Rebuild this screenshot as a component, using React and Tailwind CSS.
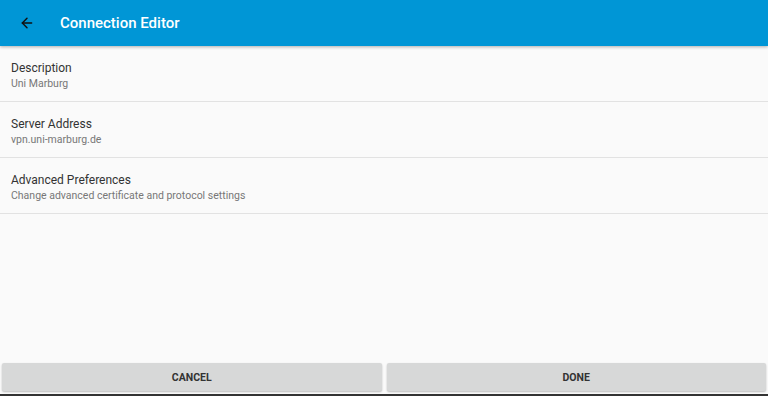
import { ArrowLeft } from 'lucide-react';

const ROWS = [
  { title: 'Description', sub: 'Uni Marburg' },
  { title: 'Server Address', sub: 'vpn.uni-marburg.de' },
  { title: 'Advanced Preferences', sub: 'Change advanced certificate and protocol settings' },
];

export default function App() {
  return (
    <div className="w-[768px] h-[396px] flex flex-col bg-[#fafafa] overflow-hidden font-['Roboto',sans-serif]">
      {/* Toolbar */}
      <div className="h-[46px] shrink-0 flex items-center bg-[#0096d6] shadow-[0_1px_3px_rgba(0,0,0,0.3)] relative z-10">
        <div className="w-[60px] flex items-center pl-[19px]">
          <ArrowLeft size={16} strokeWidth={2.2} className="text-[#111]" />
        </div>
        <h1 className="text-[15px] font-medium text-white">Connection Editor</h1>
      </div>

      {/* Preference list */}
      <div className="flex-1">
        {ROWS.map((r, i) => (
          <div key={i} className="h-[56px] flex flex-col justify-center pt-[3px] px-[11px] border-b border-[#e2e2e2]">
            <p className="text-[12px] leading-[16px] text-[#333]">{r.title}</p>
            <p className="text-[10.5px] leading-[14px] text-[#777] mt-[1px]">{r.sub}</p>
          </div>
        ))}
      </div>

      {/* Buttons */}
      <div className="flex gap-[5px] px-[2px] pb-[3px]">
        <button className="flex-1 h-[28px] pt-[2px] bg-[#d7d8d8] rounded-[2px] shadow-[0_1px_2px_rgba(0,0,0,0.25)] text-[10.5px] font-bold text-[#333]">
          CANCEL
        </button>
        <button className="flex-1 h-[28px] pt-[2px] bg-[#d7d8d8] rounded-[2px] shadow-[0_1px_2px_rgba(0,0,0,0.25)] text-[10.5px] font-bold text-[#333]">
          DONE
        </button>
      </div>
      <div className="h-[2px] bg-[#333] shrink-0" />
    </div>
  );
}
